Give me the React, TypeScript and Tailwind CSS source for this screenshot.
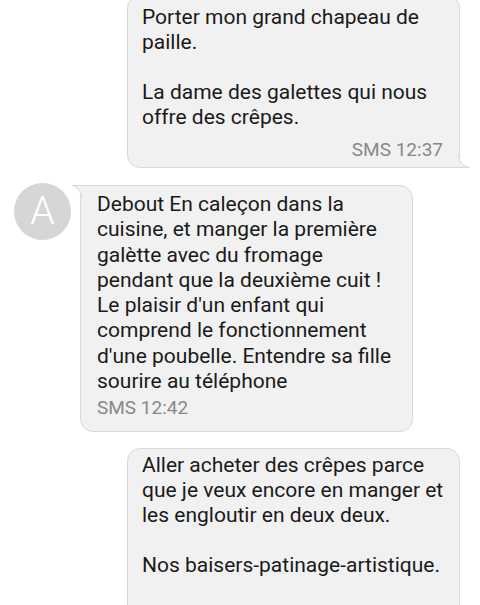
import React from "react";

const BG = "#f1f1f1";
const BORDER = "#d9d9d9";

function TailBottomRight() {
  return (
    <svg
      className="absolute bottom-[-1px] right-[-11px]"
      width="12"
      height="13"
      viewBox="0 0 12 13"
    >
      <path d="M0 0 L1 0 C1 6 4 10.5 12 12.5 L12 13 L0 13 Z" fill={BG} />
      <path d="M0.5 0 C0.5 6 4 11 11.5 12.5 L0 12.5" fill="none" stroke={BORDER} strokeWidth="1" />
    </svg>
  );
}

function TailTopLeft() {
  return (
    <svg
      className="absolute top-[-1px] left-[-9px]"
      width="10"
      height="13"
      viewBox="0 0 10 13"
    >
      <path d="M10 13 L9 13 C9 7 6 2 0 0.5 L0 0 L10 0 Z" fill={BG} />
      <path d="M9.5 13 C9.5 7 6 1.5 0 0.5 L10 0.5" fill="none" stroke={BORDER} strokeWidth="1" />
    </svg>
  );
}

export default function App() {
  return (
    <div
      className="w-[480px] h-[605px] overflow-hidden bg-white relative"
      style={{ fontFamily: "Roboto, 'Noto Sans', sans-serif" }}
    >
      <div className="flex flex-col">
        {/* Sent bubble 1 */}
        <div className="flex justify-end pr-[20px] -mt-[5px]">
          <div className="relative w-[333px] bg-[#f1f1f1] border border-[#d9d9d9] rounded-[13px] rounded-br-none pt-[9px] pb-[6px] pl-[14px] pr-[16px] text-[21px] leading-[25px] text-[#1a1a1a]">
            <p>Porter mon grand chapeau de paille.</p>
            <p className="h-[25px]"></p>
            <p>La dame des galettes qui nous offre des crêpes.</p>
            <div className="mt-[9px] text-right text-[19px] leading-[22px] text-[#888888]">
              SMS 12:37
            </div>
            <TailBottomRight />
          </div>
        </div>

        {/* Received bubble */}
        <div className="flex mt-[17px] pl-[14px]">
          <div className="w-[57px] h-[57px] rounded-full bg-[#d6d6d6] flex items-center justify-center text-white text-[39px] font-light leading-none mt-[-2px] shrink-0">
            A
          </div>
          <div className="relative ml-[9px] w-[333px] bg-[#f1f1f1] border border-[#d9d9d9] rounded-[13px] rounded-tl-none pt-[6px] pb-[12px] pl-[16px] pr-[12px] text-[21px] leading-[25.3px] text-[#1a1a1a]">
            <p>
              Debout En caleçon dans la cuisine, et manger la première galètte
              avec du fromage pendant que la deuxième cuit ! Le plaisir d'un
              enfant qui comprend le fonctionnement d'une poubelle. Entendre sa
              fille sourire au téléphone
            </p>
            <div className="mt-[3px] text-[19px] leading-[22px] text-[#888888]">
              SMS 12:42
            </div>
            <TailTopLeft />
          </div>
        </div>

        {/* Sent bubble 2 */}
        <div className="flex justify-end pr-[20px] mt-[16px]">
          <div className="relative w-[333px] bg-[#f1f1f1] border border-[#d9d9d9] rounded-[13px] pt-[4px] pb-[40px] pl-[14px] pr-[12px] text-[21px] leading-[25px] text-[#1a1a1a]">
            <p>
              Aller acheter des crêpes parce que je veux encore en manger et les
              engloutir en deux deux.
            </p>
            <p className="h-[25px]"></p>
            <p>Nos baisers-patinage-artistique.</p>
          </div>
        </div>
      </div>
    </div>
  );
}
